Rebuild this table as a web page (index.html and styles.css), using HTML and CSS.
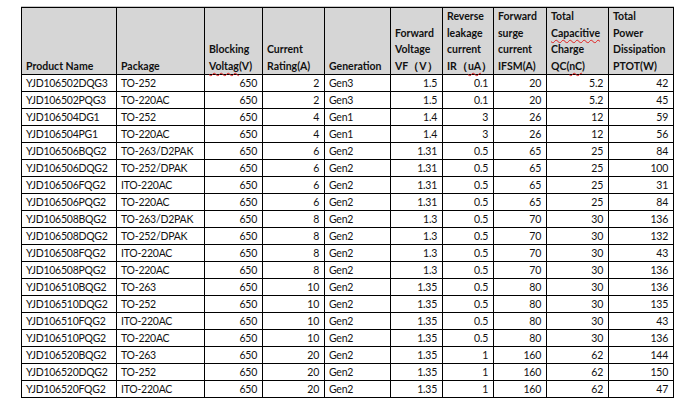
FILE: index.html
```html
<!DOCTYPE html>
<html>
<head>
<meta charset="utf-8">
<link rel="stylesheet" href="styles.css">
</head>
<body>
<div class="sheet">
<table class="spec">
<colgroup>
<col class="c1"><col class="c2"><col class="c3"><col class="c4"><col class="c5"><col class="c6"><col class="c7"><col class="c8"><col class="c9"><col class="c10">
</colgroup>
<thead>
<tr>
<th>Product Name</th>
<th>Package</th>
<th>Blocking<br><span class="sq">Voltag</span>(V)</th>
<th>Current<br>Rating(A)</th>
<th>Generation</th>
<th>Forward<br>Voltage<br>VF（V）</th>
<th>Reverse<br>leakage<br>current<br>IR（<span class="sq">uA</span>）</th>
<th>Forward<br>surge<br>current<br>IFSM(A)</th>
<th>Total<br><span class="sq">Capacitive</span><br>Charge<br>QC(<span class="sq">nC</span>)</th>
<th>Total<br>Power<br>Dissipation<br>PTOT(W)</th>
</tr>
</thead>
<tbody>
<tr><td>YJD106502DQG3</td><td>TO-252</td><td class="n">650</td><td class="n">2</td><td>Gen3</td><td class="n">1.5</td><td class="n">0.1</td><td class="n">20</td><td class="n">5.2</td><td class="n">42</td></tr>
<tr><td>YJD106502PQG3</td><td>TO-220AC</td><td class="n">650</td><td class="n">2</td><td>Gen3</td><td class="n">1.5</td><td class="n">0.1</td><td class="n">20</td><td class="n">5.2</td><td class="n">45</td></tr>
<tr><td>YJD106504DG1</td><td>TO-252</td><td class="n">650</td><td class="n">4</td><td>Gen1</td><td class="n">1.4</td><td class="n">3</td><td class="n">26</td><td class="n">12</td><td class="n">59</td></tr>
<tr><td>YJD106504PG1</td><td>TO-220AC</td><td class="n">650</td><td class="n">4</td><td>Gen1</td><td class="n">1.4</td><td class="n">3</td><td class="n">26</td><td class="n">12</td><td class="n">56</td></tr>
<tr><td>YJD106506BQG2</td><td>TO-263/D2PAK</td><td class="n">650</td><td class="n">6</td><td>Gen2</td><td class="n">1.31</td><td class="n">0.5</td><td class="n">65</td><td class="n">25</td><td class="n">84</td></tr>
<tr><td>YJD106506DQG2</td><td>TO-252/DPAK</td><td class="n">650</td><td class="n">6</td><td>Gen2</td><td class="n">1.31</td><td class="n">0.5</td><td class="n">65</td><td class="n">25</td><td class="n">100</td></tr>
<tr><td>YJD106506FQG2</td><td>ITO-220AC</td><td class="n">650</td><td class="n">6</td><td>Gen2</td><td class="n">1.31</td><td class="n">0.5</td><td class="n">65</td><td class="n">25</td><td class="n">31</td></tr>
<tr><td>YJD106506PQG2</td><td>TO-220AC</td><td class="n">650</td><td class="n">6</td><td>Gen2</td><td class="n">1.31</td><td class="n">0.5</td><td class="n">65</td><td class="n">25</td><td class="n">84</td></tr>
<tr><td>YJD106508BQG2</td><td>TO-263/D2PAK</td><td class="n">650</td><td class="n">8</td><td>Gen2</td><td class="n">1.3</td><td class="n">0.5</td><td class="n">70</td><td class="n">30</td><td class="n">136</td></tr>
<tr><td>YJD106508DQG2</td><td>TO-252/DPAK</td><td class="n">650</td><td class="n">8</td><td>Gen2</td><td class="n">1.3</td><td class="n">0.5</td><td class="n">70</td><td class="n">30</td><td class="n">132</td></tr>
<tr><td>YJD106508FQG2</td><td>ITO-220AC</td><td class="n">650</td><td class="n">8</td><td>Gen2</td><td class="n">1.3</td><td class="n">0.5</td><td class="n">70</td><td class="n">30</td><td class="n">43</td></tr>
<tr><td>YJD106508PQG2</td><td>TO-220AC</td><td class="n">650</td><td class="n">8</td><td>Gen2</td><td class="n">1.3</td><td class="n">0.5</td><td class="n">70</td><td class="n">30</td><td class="n">136</td></tr>
<tr><td>YJD106510BQG2</td><td>TO-263</td><td class="n">650</td><td class="n">10</td><td>Gen2</td><td class="n">1.35</td><td class="n">0.5</td><td class="n">80</td><td class="n">30</td><td class="n">136</td></tr>
<tr><td>YJD106510DQG2</td><td>TO-252</td><td class="n">650</td><td class="n">10</td><td>Gen2</td><td class="n">1.35</td><td class="n">0.5</td><td class="n">80</td><td class="n">30</td><td class="n">135</td></tr>
<tr><td>YJD106510FQG2</td><td>ITO-220AC</td><td class="n">650</td><td class="n">10</td><td>Gen2</td><td class="n">1.35</td><td class="n">0.5</td><td class="n">80</td><td class="n">30</td><td class="n">43</td></tr>
<tr><td>YJD106510PQG2</td><td>TO-220AC</td><td class="n">650</td><td class="n">10</td><td>Gen2</td><td class="n">1.35</td><td class="n">0.5</td><td class="n">80</td><td class="n">30</td><td class="n">136</td></tr>
<tr><td>YJD106520BQG2</td><td>TO-263</td><td class="n">650</td><td class="n">20</td><td>Gen2</td><td class="n">1.35</td><td class="n">1</td><td class="n">160</td><td class="n">62</td><td class="n">144</td></tr>
<tr><td>YJD106520DQG2</td><td>TO-252</td><td class="n">650</td><td class="n">20</td><td>Gen2</td><td class="n">1.35</td><td class="n">1</td><td class="n">160</td><td class="n">62</td><td class="n">150</td></tr>
<tr><td>YJD106520FQG2</td><td>ITO-220AC</td><td class="n">650</td><td class="n">20</td><td>Gen2</td><td class="n">1.35</td><td class="n">1</td><td class="n">160</td><td class="n">62</td><td class="n">47</td></tr>
</tbody>
</table>
</div>
</body>
</html>
```
FILE: styles.css
```css
html, body {
  margin: 0;
  padding: 0;
  background: #ffffff;
}
.sheet {
  padding: 7px 0 0 21px;
  font-family: Lato, "Liberation Sans", sans-serif;
  font-size: 10.5px;
  color: #111111;
}
.spec {
  border-collapse: collapse;
  table-layout: fixed;
  width: 653px;
  box-shadow: 0 -1px 0 #c8c8c8;
}
.c1 { width: 95px; }
.c2 { width: 88px; }
.c3 { width: 58px; }
.c4 { width: 62px; }
.c5 { width: 66px; }
.c6 { width: 52px; }
.c7 { width: 51px; }
.c8 { width: 53px; }
.c9 { width: 62px; }
.c10 { width: 65px; }
.spec th {
  background: #d6d6d6;
  border: 1px solid #000000;
  text-align: left;
  vertical-align: bottom;
  font-weight: bold;
  line-height: 16.5px;
  height: 66px;
  padding: 0 2px 0 4px;
  white-space: nowrap;
  box-sizing: border-box;
}
.spec td {
  border: 1px solid #000000;
  height: 16px;
  line-height: 16px;
  padding: 0 4px;
  white-space: nowrap;
  letter-spacing: -0.25px;
}
.spec td.n {
  text-align: right;
  padding-right: 5px;
}
.sq {
  text-decoration: underline wavy #e02020;
  text-decoration-thickness: 1px;
  text-underline-offset: 2px;
}
```
